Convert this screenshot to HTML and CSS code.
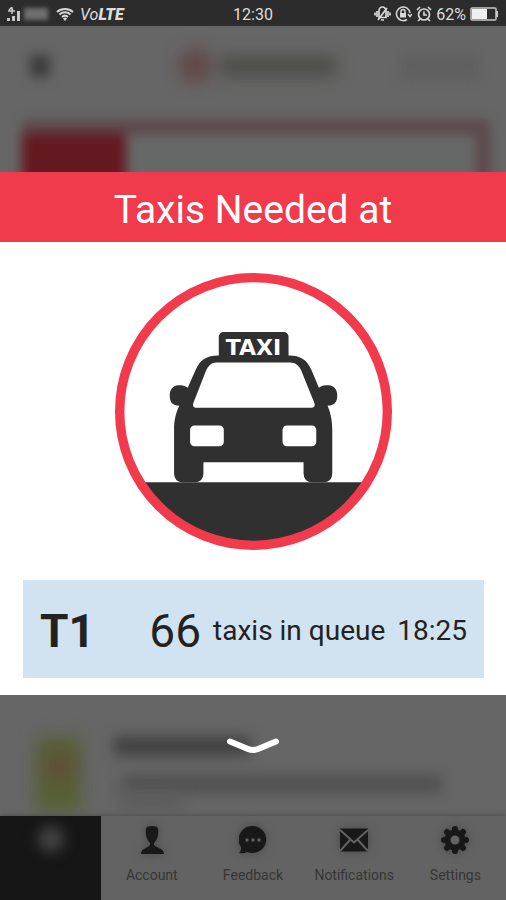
FILE: index.html
```html
<!DOCTYPE html>
<html lang="en">
<head>
    <meta charset="utf-8">
    <meta name="viewport" content="width=device-width, initial-scale=1">
    <title>Taxis Needed</title>
    <link rel="stylesheet" href="styles.css">
</head>
<body>
    <div class="statusBar">
        <div class="statusLeft">
            <svg class="signal" width="15" height="16" viewBox="0 0 15 16">
                <path d="M5 1v7M1 5h7M2 4l2-2 2 2" stroke="#c8c8c8" stroke-width="1.5" fill="none"/>
                <path d="M0 12h3v3H0zM5 10h3v5H5zM10 5h3v10h-3z" fill="#c8c8c8"/>
            </svg>
            <span class="carrier"></span>
            <svg class="wifi" width="18" height="14" viewBox="0 0 18 14">
                <path d="M1 5a12 12 0 0 1 16 0M3.500 7.500a8 8 0 0 1 11 0M6 10a4.500 4.500 0 0 1 6 0" stroke="#d8d8d8" stroke-width="2" fill="none"/>
                <path d="M7 11.500a3 3 0 0 1 4 0L9 14z" fill="#d8d8d8"/>
            </svg>
            <span class="volte">Vo<b>LTE</b></span>
        </div>
        <div class="clock">12:30</div>
        <div class="statusRight">
            <svg width="17" height="16" viewBox="0 0 17 16" fill="none" stroke="#d8d8d8" stroke-width="1.700">
                <path d="M5 4.500v7h7v-7a3.500 3.500 0 0 0-7 0zM7 14h3M3 5v6M1 6.500v3M14 5v6M16 6.500v3M4 14L13 2"/>
            </svg>
            <svg width="17" height="16" viewBox="0 0 17 16" fill="none" stroke="#d8d8d8" stroke-width="1.500">
                <path d="M12 13.500A6.800 6.800 0 1 1 15 7M13 8l2 2.500L17 8M6 7V5.500a2 2 0 0 1 4 0V7"/>
                <path d="M5 7h6v4.500H5z" fill="#d8d8d8" stroke="none"/>
            </svg>
            <svg width="16" height="16" viewBox="0 0 16 16" fill="none" stroke="#d8d8d8" stroke-width="1.700">
                <circle cx="8" cy="8.500" r="5.500"/>
                <path d="M8 5.500V9h3M1 4l3-3M15 4l-3-3M4 13l-2 2M12 13l2 2"/>
            </svg>
            <span class="percent">62%</span>
            <svg width="29" height="14" viewBox="0 0 29 14">
                <rect x="1" y="1" width="25" height="12" rx="1" fill="none" stroke="#c8c8c8" stroke-width="1.500"/>
                <path d="M2 2h15v10H2z" fill="#f0f0f0"/>
                <path d="M26 4h2v6h-2z" fill="#c8c8c8"/>
            </svg>
        </div>
    </div>

    <!-- dimmed page behind the alert -->
    <div class="behindTop">
        <div class="appHeader">
            <span class="menuBlur"></span>
            <span class="brandBlur"><i class="brandMark"></i><i class="brandName"></i></span>
            <span class="linkBlur"></span>
        </div>
        <div class="cardBlur"><span class="cardTab"></span><span class="cardBody"></span></div>
    </div>

    <div class="alert">
        <h1 class="alertTitle">Taxis Needed at</h1>
        <div class="alertBody">
            <svg class="taxi" viewBox="0 0 830 830" role="img" aria-label="Taxi">
                <defs>
                    <clipPath id="ring"><circle cx="415" cy="415" r="402"/></clipPath>
                </defs>
                <path d="M0 627h830v203H0z" fill="#303031" clip-path="url(#ring)"/>
                <circle cx="415" cy="415" r="401" fill="none" stroke="#f13a4c" stroke-width="28"/>
                <g fill="#303031">
                    <rect x="311" y="177" width="209" height="90" rx="14"/>
                    <path d="M310 247H522C556 247 575 260 588 289L611 344C619 336 628 336 640 336C658 337 666 350 666 368C666 387 656 398 637 398C647 420 651 445 651 470V600Q651 627 624 627H592Q565 627 565 600V567H265V600Q265 627 238 627H204Q177 627 177 600V470C177 445 181 420 193 398C173 398 164 387 164 368C164 350 172 337 190 336C202 336 210 337 218 344L242 289C255 260 274 247 310 247Z"/>
                </g>
                <g fill="#fff">
                    <path d="M304 268H524C542 268 551 278 558 292L597 389Q602 404 588 404H246Q230 404 235 389L273 292C280 278 288 268 304 268Z"/>
                    <rect x="225" y="457" width="101" height="62" rx="13"/>
                    <rect x="502" y="457" width="101" height="62" rx="13"/>
                    <text class="taxiSign" x="415" y="247" text-anchor="middle">TAXI</text>
                </g>
            </svg>
            <div class="queue">
                <strong class="terminal">T1</strong>
                <span class="count">66</span>
                <span class="queueText">taxis in queue</span>
                <time class="queueTime">18:25</time>
            </div>
        </div>
    </div>

    <div class="behindBottom">
        <span class="thumbBlur"></span>
        <div class="linesBlur"><i class="lineTitle"></i><i class="lineText"></i><i class="lineShort"></i></div>
        <button class="dismiss" type="button" aria-label="Close">
            <svg width="54" height="18" viewBox="0 0 54 18"><path d="M4 4.500L22 12Q27 14 32 12L50 4.500" fill="none" stroke="#fff" stroke-width="6" stroke-linecap="round"/></svg>
        </button>
    </div>

    <nav class="tabs">
        <a class="tab tabActive" href="#" aria-label="Home"><span class="homeBlur"></span></a>
        <a class="tab" href="#">
            <svg width="28" height="28" viewBox="0 0 28 28"><path d="M9 1Q14-1 19 1C21 3 20 7 20 9C19 13 18 15 16 17V19C18 22 26 22 26 28H3C3 22 11 22 12 19V17C10 15 9 13 8 9C8 7 7 3 9 1Z"/></svg>
            Account
        </a>
        <a class="tab" href="#">
            <svg width="28" height="28" viewBox="0 0 28 28">
                <path d="M14 0a14 13.500 0 1 1-6 26Q5 28 0 27Q3 24 2 21A14 13.500 0 0 1 14 0Z"/>
                <g class="hole"><circle cx="8" cy="14" r="1.700"/><circle cx="14" cy="14" r="1.700"/><circle cx="20" cy="14" r="1.700"/></g>
            </svg>
            Feedback
        </a>
        <a class="tab" href="#">
            <svg width="28" height="28" viewBox="0 0 28 28">
                <path d="M0 2.500h28v23H0z"/>
                <path class="cut" d="M0 4l14 12.500L28 4M0 25l10-11M28 25L18 14"/>
            </svg>
            Notifications
        </a>
        <a class="tab" href="#">
            <svg width="28" height="28" viewBox="0 0 28 28">
                <circle cx="14" cy="14" r="10.500"/>
                <path class="teeth" d="M14 3V25M3 14H25M6 6L22 22M22 6L6 22"/>
                <circle class="hole" cx="14" cy="14" r="4.500"/>
            </svg>
            Settings
        </a>
    </nav>
</body>
</html>
```
FILE: styles.css
```css
* {
    box-sizing: border-box;
}

body {
    margin: 0;
    min-height: 100vh;
    display: flex;
    flex-direction: column;
    background-color: #666666;
    font-family: Roboto, "Liberation Sans", sans-serif;
    color: #222222;
}

/* status bar */
.statusBar {
    display: grid;
    grid-template-columns: 1fr auto 1fr;
    align-items: center;
    height: 26px;
    padding: 2px 7px 0 7px;
    background-color: #2c2c2c;
    color: #dddddd;
    font-size: 16px;
}

.statusLeft, .statusRight {
    display: flex;
    align-items: center;
}

.statusRight {
    justify-content: flex-end;
    gap: 4px;
}

.carrier {
    width: 24px;
    height: 12px;
    margin: 0 8px 0 2px;
    background-color: #6e6e6e;
    filter: blur(2px);
}

.volte {
    margin-left: 6px;
    font-size: 16px;
    font-style: italic;
}

.volte b {
    font-weight: 900;
}

/* blurred page behind */
.behindTop {
    height: 146px;
    overflow: hidden;
}

.appHeader {
    display: flex;
    align-items: center;
    justify-content: space-between;
    height: 80px;
    padding: 0 26px 0 30px;
}

.menuBlur {
    width: 20px;
    height: 22px;
    background-color: #3c3c3c;
    filter: blur(6px);
}

.brandBlur {
    display: flex;
    align-items: center;
    gap: 8px;
    margin-left: 64px;
}

.brandMark {
    width: 34px;
    height: 34px;
    border-radius: 50%;
    background-color: #644848;
    filter: blur(8px);
}

.brandName {
    width: 116px;
    height: 20px;
    background-color: #4c4c47;
    filter: blur(8px);
}

.linkBlur {
    width: 80px;
    height: 24px;
    background-color: #5f5f5f;
    filter: blur(6px);
}

.cardBlur {
    display: flex;
    height: 120px;
    margin: 14px 16px 0 22px;
    border: 14px solid #5c464a;
    border-left: 0;
    border-radius: 6px;
    filter: blur(6px);
}

.cardTab {
    width: 104px;
    background-color: #641820;
}

.cardBody {
    flex: 1;
    background-color: #666767;
}

/* alert */
.alert {
    background-color: #ffffff;
}

.alertTitle {
    margin: 0;
    padding: 14px 0 8px 0;
    background-color: #f13a4c;
    color: #ffffff;
    font-size: 39px;
    font-weight: 400;
    line-height: 48px;
    text-align: center;
}

.alertBody {
    display: flex;
    flex-direction: column;
    align-items: center;
    gap: 30px;
    padding: 31px 22px 17px 23px;
}

.taxi {
    width: 277px;
    height: 277px;
}

.taxiSign {
    font-family: "DejaVu Sans", sans-serif;
    font-size: 66px;
    font-weight: bold;
}

.queue {
    display: flex;
    align-items: center;
    width: 100%;
    height: 98px;
    padding: 4px 17px 0 17px;
    background-color: #d1e3f1;
    font-size: 28px;
    line-height: 48px;
    white-space: nowrap;
}

.terminal {
    font-size: 46px;
}

.count {
    margin-left: auto;
    font-size: 46px;
}

.queueText, .queueTime {
    margin-left: 12px;
}

/* lower part of the page */
.behindBottom {
    position: relative;
    display: flex;
    flex: 1;
    gap: 32px;
    padding: 42px 60px 0 36px;
    overflow: hidden;
}

.thumbBlur {
    width: 46px;
    height: 74px;
    background: radial-gradient(circle at 50% 40%, #644a3a, #566034 24px);
    filter: blur(8px);
}

.linesBlur {
    display: flex;
    flex: 1;
    flex-direction: column;
}

.lineTitle, .lineText, .lineShort {
    height: 18px;
    filter: blur(7px);
}

.lineTitle {
    width: 136px;
    margin-bottom: 20px;
    background-color: #3e3e3e;
}

.lineText {
    margin-left: 8px;
    margin-right: 4px;
    background-color: #505050;
}

.lineShort {
    width: 60px;
    margin-left: 8px;
    background-color: #5c5c5c;
}

.dismiss {
    position: absolute;
    top: 42px;
    left: 50%;
    transform: translateX(-50%);
    padding: 0;
    border: 0;
    background: none;
    line-height: 0;
    cursor: pointer;
}

/* tab bar */
.tabs {
    display: grid;
    grid-template-columns: repeat(5, 1fr);
    height: 84px;
    box-shadow: 0 -1px 4px #505050;
    background-color: #636363;
}

.tab {
    display: flex;
    flex-direction: column;
    align-items: center;
    gap: 12px;
    padding-top: 10px;
    color: #353535;
    font-size: 14px;
    line-height: 18px;
    text-decoration: none;
}

.tab svg {
    fill: #181818;
    filter: drop-shadow(0 0 5px #484848);
}

.tab .hole {
    fill: #636363;
}

.tab .cut {
    fill: none;
    stroke: #636363;
    stroke-width: 2;
}

.tab .teeth {
    stroke: #181818;
    stroke-width: 6;
    stroke-linecap: round;
}

.tabActive {
    background-color: #161616;
}

.homeBlur {
    width: 26px;
    height: 26px;
    border-radius: 50%;
    background-color: #444444;
    filter: blur(7px);
}
```
